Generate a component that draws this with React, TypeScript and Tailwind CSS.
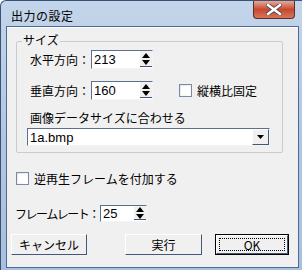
import React from "react";

const font = { fontFamily: '"Noto Sans CJK JP", "Noto Sans", sans-serif' };

function Spin({ value, w, h }: { value: string; w: number; h: number }) {
  return (
    <div
      className="flex bg-white border-t border-l border-t-[#5c6f8f] border-l-[#5c6f8f] border-r border-b border-r-[#f4f4f4] border-b-[#f4f4f4]"
      style={{ width: w, height: h }}
    >
      <div className="flex-1 pl-[2px] text-[13px] leading-none flex items-center text-black" style={{ fontFamily: '"Liberation Sans", sans-serif' }}>
        {value}
      </div>
      <div className="w-[12px] flex flex-col items-center justify-center gap-[2px] bg-[#f0f0f0] border-b border-b-[#3f5677] mb-[1px]">
        <svg width="8" height="5" viewBox="0 0 8 5"><path d="M4 0 L8 5 L0 5 Z" fill="#000" /></svg>
        <svg width="8" height="5" viewBox="0 0 8 5"><path d="M0 0 L8 0 L4 5 Z" fill="#000" /></svg>
      </div>
    </div>
  );
}

function Check({ label }: { label: string }) {
  return (
    <div className="flex items-center gap-[5px]">
      <div className="w-[13px] h-[13px] border border-[#7b8aa3] bg-gradient-to-br from-[#dfe3e8] to-white p-[1px]">
        <div className="w-full h-full bg-white" />
      </div>
      <span className="text-[12px] leading-none text-black whitespace-nowrap">{label}</span>
    </div>
  );
}

function Btn({ label, w, def }: { label: string; w: number; def?: boolean }) {
  if (def) {
    return (
      <div className="h-[21px] border border-black" style={{ width: w }}>
        <div className="h-full border-t border-l border-t-white border-l-white border-r border-b border-r-[#44597a] border-b-[#44597a] bg-[#f0f0f0] p-[2px]">
          <div className="h-full border border-dotted border-black flex items-center justify-center text-[12px] leading-none text-black">
            {label}
          </div>
        </div>
      </div>
    );
  }
  return (
    <div
      className="h-[21px] border-t border-l border-t-white border-l-white border-r border-b border-r-[#44597a] border-b-[#44597a] bg-[#f0f0f0] flex items-center justify-center text-[12px] leading-none text-black whitespace-nowrap"
      style={{ width: w }}
    >
      {label}
    </div>
  );
}

export default function App() {
  return (
    <div
      className="w-[302px] h-[270px] flex flex-col border-l border-t border-[#3a5274] rounded-tl-[6px] bg-gradient-to-b from-[#c3d5ea] via-[#b1c7e1] to-[#a9c0dc] overflow-hidden"
      style={font}
    >
      {/* title bar */}
      <div className="h-[25px] flex items-start justify-between">
        <div className="pl-[10px] pt-[9px] text-[12px] leading-none text-black tracking-[0.5px]">出力の設定</div>
        <div className="mr-[7px] w-[42px] h-[18px] rounded-b-[4px] border border-t-0 border-[#5a2f2a] bg-gradient-to-b from-[#e6a896] via-[#c5482f] to-[#d77559] flex items-center justify-center">
          <svg width="16" height="11" viewBox="0 0 16 11">
            <path d="M2 1 L14 10 M14 1 L2 10" stroke="#5a4a4a" strokeWidth="4.2" strokeLinecap="square" />
            <path d="M2 1 L14 10 M14 1 L2 10" stroke="#ffffff" strokeWidth="2.4" strokeLinecap="square" />
          </svg>
        </div>
      </div>
      {/* client */}
      <div className="flex-1 ml-[5px] mr-[3px] mb-[2px] border border-[#4d6a94] bg-[#f0f0f0] flex flex-col">
        <div className="h-[1px] bg-white" />
        {/* group */}
        <div className="relative ml-[9px] mt-[13px] w-[267px] h-[112px] border border-[#cbcbcb] rounded-[2px]">
          <div className="absolute left-[5px] top-[-8px] px-[1px] bg-[#f0f0f0] text-[12px] leading-none text-black">サイズ</div>
          <div className="flex flex-col pl-[13px] pt-[8px]">
            <div className="flex items-center">
              <span className="w-[61px] text-[12px] leading-none text-black whitespace-nowrap">水平方向：</span>
              <Spin value="213" w={62} h={19} />
            </div>
            <div className="flex items-center mt-[12px]">
              <span className="w-[61px] text-[12px] leading-none text-black whitespace-nowrap">垂直方向：</span>
              <Spin value="160" w={62} h={19} />
              <div className="ml-[26px]">
                <Check label="縦横比固定" />
              </div>
            </div>
            <div className="mt-[12px] text-[12px] leading-none text-black whitespace-nowrap">画像データサイズに合わせる</div>
            <div className="-ml-[3px] mt-[4px] w-[243px] h-[18px] flex bg-white border-t border-l border-t-[#5c6f8f] border-l-[#5c6f8f] border-r border-b border-r-[#f4f4f4] border-b-[#f4f4f4]">
              <div className="flex-1 pl-[2px] flex items-center text-[13px] leading-none text-black" style={{ fontFamily: '"Liberation Sans", sans-serif' }}>
                1a.bmp
              </div>
              <div className="w-[17px] bg-[#f0f0f0] border-t border-l border-t-white border-l-white border-r border-b border-r-[#44597a] border-b-[#44597a] flex items-center justify-center">
                <svg width="7" height="4" viewBox="0 0 7 4"><path d="M0 0 L7 0 L3.5 4 Z" fill="#000" /></svg>
              </div>
            </div>
          </div>
        </div>
        {/* reverse checkbox */}
        <div className="ml-[9px] mt-[19px]">
          <Check label="逆再生フレームを付加する" />
        </div>
        {/* frame rate */}
        <div className="ml-[8px] mt-[20px] flex items-center">
          <span className="w-[85px] text-[12px] leading-none text-black whitespace-nowrap tracking-[-1.5px]">フレームレート：</span>
          <Spin value="25" w={47} h={17} />
        </div>
        {/* buttons */}
        <div className="flex items-center ml-[4px] mt-[12px]">
          <Btn label="キャンセル" w={76} />
          <div className="ml-[38px]">
            <Btn label="実行" w={77} />
          </div>
          <div className="ml-[13px]">
            <Btn label="OK" w={74} def />
          </div>
        </div>
      </div>
    </div>
  );
}
